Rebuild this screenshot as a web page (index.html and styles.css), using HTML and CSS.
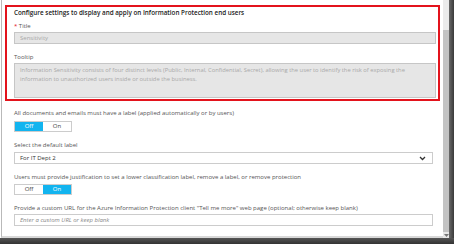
FILE: index.html
```html
<!DOCTYPE html>
<html>
<head>
<meta charset="utf-8">
<link rel="stylesheet" href="styles.css">
</head>
<body>
<div class="window">
  <div class="main">
    <div class="content">
      <div class="redbox">
        <div class="heading">Configure settings to display and apply on Information Protection end users</div>
        <div class="label first"><span class="req">*</span> Title</div>
        <div class="field disabled">Sensitivity</div>
        <div class="label tip">Tooltip</div>
        <div class="area disabled">Information Sensitivity consists of four distinct levels (Public, Internal, Confidential, Secret), allowing the user to identify the risk of exposing the<br>information to unauthorized users inside or outside the business.</div>
      </div>
      <div class="lower">
        <div class="label l1">All documents and emails must have a label (applied automatically or by users)</div>
        <div class="toggle t1"><span class="opt on">Off</span><span class="opt">On</span></div>
        <div class="label l2">Select the default label</div>
        <div class="field select"><span>For IT Dept 2</span><svg class="chev" width="7" height="5" viewBox="0 0 7 5"><path d="M1 1 L3.5 3.5 L6 1" fill="none" stroke="#333" stroke-width="1.3"/></svg></div>
        <div class="label l2">Users must provide justification to set a lower classification label, remove a label, or remove protection</div>
        <div class="toggle t2"><span class="opt">Off</span><span class="opt on">On</span></div>
        <div class="label l2">Provide a custom URL for the Azure Information Protection client "Tell me more" web page (optional; otherwise keep blank)</div>
        <div class="field url">Enter a custom URL or keep blank</div>
      </div>
    </div>
    <div class="scrollbar">
      <div class="track"></div>
      <div class="thumb"></div>
      <div class="arrow"><svg width="5" height="3" viewBox="0 0 5 3"><path d="M0 0 L5 0 L2.5 3 Z" fill="#777"/></svg></div>
    </div>
    <div class="edge-right"></div>
  </div>
  <div class="edge-bottom"></div>
</div>
</body>
</html>
```

FILE: styles.css
```css
html, body {
  margin: 0;
  padding: 0;
  background: #ffffff;
}
body {
  width: 454px;
  height: 244px;
  overflow: hidden;
  font-family: "Open Sans", "Noto Sans", sans-serif;
  font-size: 6px;
  color: #555;
}
.window {
  display: flex;
  flex-direction: column;
  width: 454px;
  height: 244px;
}
.main {
  flex: 1;
  display: flex;
  min-height: 0;
}
.content {
  flex: 1;
  margin-left: 1px;
  border-left: 1px solid #b9b9b9;
  padding: 5px 3px 0 3px;
  box-sizing: border-box;
  border-bottom: 2px solid #d8d8d8;
}
.redbox {
  border: 2px solid #e3131c;
  padding: 0 2px 1px 7px;
}
.heading {
  margin-top: 2px;
  line-height: 8px;
  height: 8px;
  font-weight: 600;
  color: #222;
  font-size: 6.3px;
  white-space: nowrap;
}
.label {
  line-height: 8px;
  height: 8px;
  white-space: nowrap;
}
.label.first { margin-top: 5px; }
.label.tip { margin-top: 9px; }
.req { color: #e3131c; }
.field {
  box-sizing: border-box;
  height: 12px;
  margin-top: 2px;
  border: 1px solid #cccccc;
  padding: 0 5px;
  line-height: 10px;
  white-space: nowrap;
}
.disabled {
  background: #e6e6e6;
  border: 1px solid #c6c6c6;
  color: #a8a8a8;
}
.area {
  box-sizing: border-box;
  height: 35px;
  margin-top: 2px;
  padding: 2px 1px 2px 5px;
  line-height: 9px;
  font-size: 5.8px;
  white-space: nowrap;
}
.lower {
  padding: 0 7px 0 9px;
}
.label.l1 { margin-top: 8px; }
.label.l2 { margin-top: 9px; }
.toggle {
  display: flex;
  width: 58px;
  height: 11px;
  box-sizing: border-box;
  border: 1px solid #cccccc;
  margin-top: 4px;
}
.toggle.t2 { margin-top: 3px; }
.opt {
  flex: 1;
  text-align: center;
  line-height: 9px;
  color: #444;
}
.opt.on {
  background: #12b4ef;
  color: #fff;
}
.select {
  margin-top: 3px;
  display: flex;
  align-items: center;
  justify-content: space-between;
  color: #333;
}
.chev { margin-right: 1px; }
.url {
  font-style: italic;
  color: #888;
}
.scrollbar {
  width: 6px;
  display: flex;
  flex-direction: column;
  background: #e8e8e8;
}
.track {
  height: 30px;
  background: #ebebeb;
}
.thumb {
  flex: 1;
  background: #c3c3c3;
}
.arrow {
  height: 6px;
  display: flex;
  align-items: center;
  justify-content: center;
  background: #e8e8e8;
}
.edge-right {
  width: 5px;
  background: linear-gradient(to right, #6a6a6a, #3a3a3a);
}
.edge-bottom {
  height: 6px;
  background: linear-gradient(to bottom, #555, #333);
}
```
